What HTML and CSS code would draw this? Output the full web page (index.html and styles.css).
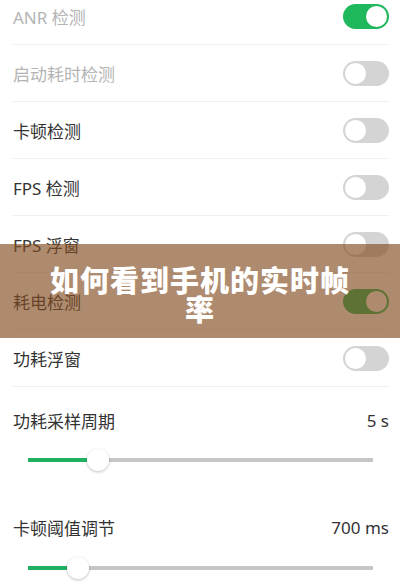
FILE: index.html
```html
<!DOCTYPE html>
<html lang="zh-CN">
<head>
    <meta charset="UTF-8">
    <meta name="viewport" content="width=device-width, initial-scale=1.0">
    <title>如何看到手机的实时帧率</title>
    <link rel="stylesheet" href="styles.css">
</head>
<body>
    <div class="page">
        <ul class="settings">
            <li class="row disabled">
                <span class="label">ANR 检测</span>
                <span class="switch on"></span>
            </li>
            <li class="row disabled">
                <span class="label">启动耗时检测</span>
                <span class="switch"></span>
            </li>
            <li class="row">
                <span class="label">卡顿检测</span>
                <span class="switch"></span>
            </li>
            <li class="row">
                <span class="label">FPS 检测</span>
                <span class="switch"></span>
            </li>
            <li class="row">
                <span class="label">FPS 浮窗</span>
                <span class="switch"></span>
            </li>
            <li class="row">
                <span class="label">耗电检测</span>
                <span class="switch on"></span>
            </li>
            <li class="row">
                <span class="label">功耗浮窗</span>
                <span class="switch"></span>
            </li>
        </ul>

        <div class="slider-block">
            <div class="slider-head">
                <span class="label">功耗采样周期</span>
                <span class="value">5 s</span>
            </div>
            <div class="slider">
                <div class="fill" style="width: 60px"></div>
                <div class="thumb"></div>
                <div class="rest"></div>
            </div>
        </div>

        <div class="slider-block second">
            <div class="slider-head">
                <span class="label">卡顿阈值调节</span>
                <span class="value">700 ms</span>
            </div>
            <div class="slider">
                <div class="fill" style="width: 40px"></div>
                <div class="thumb"></div>
                <div class="rest"></div>
            </div>
        </div>

        <div class="banner">
            <h1>如何看到手机的实时帧率</h1>
        </div>
    </div>
</body>
</html>
```

FILE: styles.css
```css
* {
    margin: 0;
    padding: 0;
    box-sizing: border-box;
    font-family: "Noto Sans", "Noto Sans CJK SC", sans-serif;
}
body {
    background: #ffffff;
    color: #333333;
    overflow: hidden;
}
.page {
    position: relative;
    height: 584px;
    overflow: hidden;
}
.settings {
    list-style: none;
    margin-top: -12px;
    padding: 0 11px 0 13px;
}
.row {
    display: flex;
    align-items: center;
    justify-content: space-between;
    height: 57px;
    border-bottom: 1px solid #efefef;
}
.label {
    font-size: 17px;
    color: #333;
}
.disabled .label {
    color: #b4b4b4;
}
.switch {
    position: relative;
    width: 46px;
    height: 25px;
    border-radius: 13px;
    background: #d4d4d4;
}
.switch::after {
    content: "";
    position: absolute;
    top: 2px;
    left: 2px;
    width: 21px;
    height: 21px;
    border-radius: 50%;
    background: #fff;
}
.switch.on {
    background: #1fb85c;
}
.switch.on::after {
    left: 23px;
}
.slider-block {
    padding: 21px 11px 0 13px;
}
.slider-block.second {
    padding-top: 43px;
}
.slider-head {
    display: flex;
    justify-content: space-between;
    align-items: center;
    height: 24px;
}
.value {
    font-size: 17px;
    color: #333;
}
.slider {
    display: flex;
    align-items: center;
    height: 24px;
    margin: 16px 16px 0 15px;
}
.second .slider {
    margin-top: 17px;
}
.fill {
    height: 4px;
    background: #21b060;
}
.thumb {
    flex: none;
    width: 22px;
    height: 22px;
    margin: 0 -1px;
    border-radius: 50%;
    background: #fff;
    box-shadow: 0 1px 3px rgba(0, 0, 0, 0.25);
    position: relative;
}
.rest {
    flex: 1;
    height: 4px;
    background: #c6c6c6;
}
.banner {
    position: absolute;
    left: 0;
    right: 0;
    top: 244px;
    height: 94px;
    padding: 21px 40px 0;
    background: rgba(131, 77, 34, 0.65);
    text-align: center;
}
.banner h1 {
    color: #fff;
    font-size: 29px;
    font-weight: 900;
    line-height: 29px;
    letter-spacing: 1px;
    font-family: "Noto Sans CJK SC", sans-serif;
}
```
